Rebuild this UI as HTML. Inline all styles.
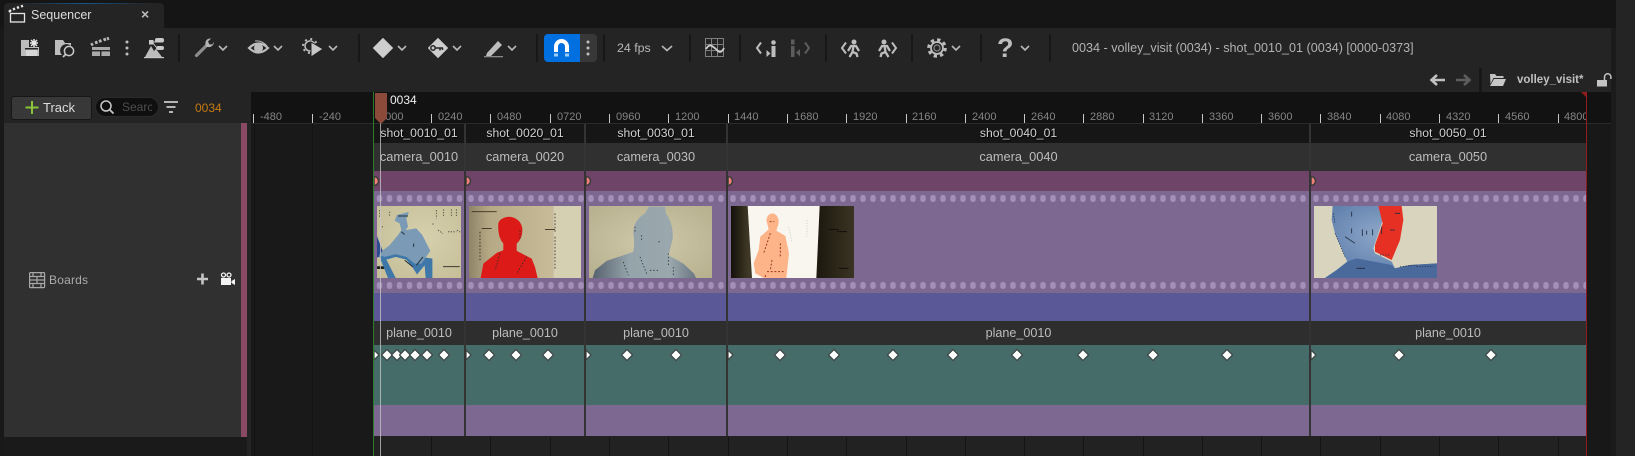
<!DOCTYPE html>
<html><head><meta charset="utf-8"><title>Sequencer</title>
<style>
html,body{margin:0;padding:0;background:#1b1b1b}
#p{position:relative;width:1635px;height:456px;overflow:hidden;background:#1b1b1b;font-family:"Liberation Sans",sans-serif}
#p div,#p svg{position:absolute}
.t{white-space:nowrap;line-height:16px;height:16px}
.c{text-align:center;white-space:nowrap;line-height:16px;height:16px}
.s{top:125px;font-size:12.2px;color:#d0d0d0;text-shadow:1px 1px 1px #000}
.m{top:149px;font-size:12.8px;color:#bdbdbd}
.l{top:325px;font-size:12.6px;color:#bdbdbd}
.r{top:109px;font-size:11px;color:#858585}
</style></head><body><div id="p">
<div style="left:0;top:0;width:1616px;height:456px;background:#151515"></div>
<div style="left:1616px;top:0;width:19px;height:456px;background:#242424"></div>
<div style="left:1611px;top:28px;width:5px;height:428px;background:#1b1b1b"></div>
<div style="left:0;top:28px;width:4px;height:428px;background:#191919"></div>
<!-- tab -->
<div style="left:4px;top:3px;width:160px;height:25px;background:#242424;border-radius:4px 4px 0 0"></div>
<div style="left:20px;top:3px;width:130px;height:1px;background:linear-gradient(90deg,#242424,#14578c 50%,#242424)"></div>
<div class="t" style="left:31px;top:7px;font-size:12.5px;color:#dcdcdc">Sequencer</div>
<div class="t" style="left:141px;top:6px;font-size:14px;font-weight:bold;color:#bdbdbd">×</div>
<!-- toolbar -->
<div style="left:4px;top:28px;width:1607px;height:64px;background:#242424"></div>
<!-- left header & panel -->
<div style="left:4px;top:92px;width:247px;height:31px;background:#242424"></div>
<div style="left:4px;top:123px;width:237px;height:314px;background:#303030"></div>
<div style="left:241px;top:123px;width:6px;height:314px;background:#8a4a64"></div>
<div style="left:4px;top:437px;width:243px;height:19px;background:#1a1a1a"></div>
<div style="left:247px;top:123px;width:4px;height:333px;background:#242424"></div>
<!-- timeline bg -->
<div style="left:251px;top:92px;width:1360px;height:31px;background:#121212"></div>
<div style="left:251px;top:123px;width:1360px;height:1px;background:#2b2b2b"></div>
<div style="left:251px;top:124px;width:122px;height:332px;background:#191919"></div>
<div style="left:1587px;top:124px;width:24px;height:332px;background:#181818"></div>
<div style="left:373px;top:436px;width:1213px;height:20px;background:#222"></div>
<!-- rows -->
<div style="left:374px;top:124px;width:1212px;height:19px;background:#161616"></div>
<div style="left:374px;top:143px;width:1212px;height:28px;background:#303030"></div>
<div style="left:374px;top:171px;width:1212px;height:20px;background:#6e4468"></div>
<div style="left:374px;top:191px;width:1212px;height:102px;background:#7c6890"></div>
<div style="left:374px;top:293px;width:1212px;height:28px;background:#5a5896"></div>
<div style="left:374px;top:321px;width:1212px;height:24px;background:#2e2e2e"></div>
<div style="left:374px;top:345px;width:1212px;height:60px;background:#466c69"></div>
<div style="left:374px;top:405px;width:1212px;height:31px;background:#7c6890"></div>

<!-- thumbnails -->
<svg style="left:377px;top:206px" width="84" height="72" viewBox="12 18 252 215" preserveAspectRatio="none">
<defs><radialGradient id="b1" cx=".55" cy=".45" r=".75"><stop offset="0" stop-color="#d6d0ae"/><stop offset="1" stop-color="#c4bd96"/></radialGradient></defs>
<rect x="12" y="18" width="252" height="215" fill="url(#b1)"/>
<path d="M12 108 L30 155 L18 170 L12 172Z" fill="#2c4c92"/>
<path d="M12 198h30v8h-30z" fill="#1c1c18"/>
<path d="M65 62 L72 45 L108 35 L100 55 L105 80 L98 90 L130 85 L148 105 L172 152 L158 172 L178 175 L178 233 L158 233 L155 195 L132 222 L118 200 L100 178 L68 170 L40 178 L68 233 L45 233 L30 195 L18 165 L30 150 L50 135 L75 105 L85 90 L80 70 Z" fill="#7a9ab5"/>
<path d="M18 165 L30 195 L45 233 L68 233 L40 178 L68 170 L100 178 L118 200 L132 222 L155 195 L158 233 L178 233 L178 175 L158 172 L145 190 L125 190 L100 170 L68 162 L35 170Z" fill="#3f78a8"/>
<path d="M75 48h30M85 95l10 8M122 130v10M95 180l25 20M150 170l-20 25" stroke="#23303a" stroke-width="3" fill="none"/>
<path d="M210 199h50" stroke="#3a3a30" stroke-width="3"/>
<path d="M190 30v25M212 28v20M235 28v20M250 28v20M180 70v8M195 90l15 10M225 95h25M252 90l10 6M20 30v22M50 35v12M28 78v8" stroke="#44443a" stroke-width="2.500" fill="none" stroke-dasharray="4 4"/>
</svg>
<svg style="left:469px;top:206px" width="112" height="72" viewBox="387 288 336 215" preserveAspectRatio="none">
<defs><linearGradient id="g2" x1="0" x2="1" y1="0" y2="0"><stop offset="0" stop-color="#8f8466"/><stop offset=".25" stop-color="#b6aa86"/><stop offset="1" stop-color="#c8bc98"/></linearGradient></defs>
<rect x="387" y="288" width="253" height="215" fill="url(#g2)"/>
<rect x="640" y="288" width="83" height="215" fill="#d6d0b2"/>
<path d="M475 340 Q480 322 510 320 Q542 325 547 355 Q548 385 530 400 L530 422 L575 445 L585 470 L593 503 L422 503 L430 460 L470 428 L490 420 L490 400 Q472 380 475 340Z" fill="#dc1a18"/>
<path d="M395 305h75M425 355h30M615 358h30" stroke="#3a3020" stroke-width="2.500" fill="none"/>
<path d="M420 365v90M645 310v60M645 380v100M540 360v30M480 430l-15 50M560 440l-30 50" stroke="#3a2a20" stroke-width="2.500" fill="none" stroke-dasharray="5 5"/>
</svg>
<svg style="left:589px;top:206px" width="123" height="72" viewBox="747 288 369 215" preserveAspectRatio="none">
<defs><radialGradient id="b3" cx=".5" cy=".5" r=".75"><stop offset="0" stop-color="#cfc9aa"/><stop offset="1" stop-color="#b5ae8c"/></radialGradient>
<linearGradient id="f3" x1="0" x2="1" y1="0" y2="0"><stop offset="0" stop-color="#56626e"/><stop offset=".35" stop-color="#95a3aa"/><stop offset=".75" stop-color="#9aa8ae"/><stop offset="1" stop-color="#6a7680"/></linearGradient></defs>
<rect x="747" y="288" width="369" height="215" fill="url(#b3)"/>
<path d="M927 290 L975 290 L978 310 Q1000 340 998 385 Q990 420 985 435 L1030 460 L1062 490 L1068 503 L758 503 L765 480 L800 452 L880 425 Q885 400 880 370 Q880 330 915 310Z" fill="url(#f3)"/>
<path d="M905 375v20M955 395h10M885 350v15M850 455l15 40M930 480h30M985 430v40M900 440l20 50M1000 470v25" stroke="#2a2f33" stroke-width="2.500" fill="none" stroke-dasharray="4 6"/>
</svg>
<svg style="left:731px;top:206px" width="123" height="72" viewBox="12 18 369 216" preserveAspectRatio="none">
<defs><linearGradient id="d4" x1="0" x2="1" y1="0" y2="0"><stop offset="0" stop-color="#15110a"/><stop offset=".14" stop-color="#3f3826"/><stop offset=".72" stop-color="#1e1a10"/><stop offset="1" stop-color="#3b3423"/></linearGradient></defs>
<rect x="12" y="18" width="369" height="216" fill="url(#d4)"/>
<path d="M62 18 L278 18 L268 234 L75 234 L68 120Z" fill="#f8f6ef"/>
<path d="M118 60 Q122 40 138 40 Q156 45 155 70 L148 92 L175 108 L186 160 L178 234 L110 234 L85 220 L80 190 L95 150 L100 110 L125 88Z" fill="#fdb489"/>
<path d="M128 65h14M130 100l-20 60M160 130v40M120 215h50M135 180l-5 30M115 225v8" stroke="#9a3a20" stroke-width="3" fill="none" stroke-dasharray="6 5"/>
<path d="M185 80l10 45M240 60v50" stroke="#b9b9b2" stroke-width="1.500" stroke-dasharray="4 4"/>
<path d="M305 88h30M330 95h30M335 205h30" stroke="#0e0c08" stroke-width="2.500"/>
</svg>
<svg style="left:1314px;top:206px" width="123" height="72" viewBox="12 18 369 216" preserveAspectRatio="none">
<defs><radialGradient id="h5b" cx=".5" cy=".4" r=".75"><stop offset="0" stop-color="#8fa8c8"/><stop offset="1" stop-color="#4f72a4"/></radialGradient></defs>
<rect x="12" y="18" width="369" height="216" fill="#d8d4be"/>
<path d="M68 18 L205 18 L218 60 L205 100 L190 145 L195 160 L245 185 L255 205 L300 195 L381 190 L381 234 L45 234 L80 210 L112 185 L105 170 L75 100 L65 60Z" fill="url(#h5b)"/>
<path d="M45 234 L80 210 L112 185 L140 175 L245 195 L255 205 L300 195 L381 190 L381 234Z" fill="#4a6a9c"/>
<path d="M205 18 L275 18 L280 60 L270 120 L245 180 L195 155 L195 135 L218 70Z" fill="#e63024"/>
<path d="M125 35v15M125 85v15M157 88v20M170 92v12M188 88v18M215 80v22M105 110l30 20M140 205h25M240 90h15M255 40h15" stroke="#1e2a3e" stroke-width="2.500" fill="none"/>
<path d="M70 40l5 30M75 100l30 70M210 165h30M270 200l50 -5M320 200h50" stroke="#1e2a3e" stroke-width="2" fill="none" stroke-dasharray="4 4"/>
</svg>

<!-- section labels -->
<div class="c s" style="left:373px;width:92px">shot_0010_01</div>
<div class="c s" style="left:465px;width:120px">shot_0020_01</div>
<div class="c s" style="left:585px;width:142px">shot_0030_01</div>
<div class="c s" style="left:727px;width:583px">shot_0040_01</div>
<div class="c s" style="left:1310px;width:276px">shot_0050_01</div>
<div class="c m" style="left:373px;width:92px">camera_0010</div>
<div class="c m" style="left:465px;width:120px">camera_0020</div>
<div class="c m" style="left:585px;width:142px">camera_0030</div>
<div class="c m" style="left:727px;width:583px">camera_0040</div>
<div class="c m" style="left:1310px;width:276px">camera_0050</div>
<div class="c l" style="left:373px;width:92px">plane_0010</div>
<div class="c l" style="left:465px;width:120px">plane_0010</div>
<div class="c l" style="left:585px;width:142px">plane_0010</div>
<div class="c l" style="left:727px;width:583px">plane_0010</div>
<div class="c l" style="left:1310px;width:276px">plane_0010</div>

<!-- ruler labels -->
<div class="t r" style="left:260px">-480</div><div class="t r" style="left:319px">-240</div>
<div class="t r" style="left:379px">0000</div><div class="t r" style="left:438px">0240</div>
<div class="t r" style="left:497px">0480</div><div class="t r" style="left:557px">0720</div>
<div class="t r" style="left:616px">0960</div><div class="t r" style="left:675px">1200</div>
<div class="t r" style="left:734px">1440</div><div class="t r" style="left:794px">1680</div>
<div class="t r" style="left:853px">1920</div><div class="t r" style="left:912px">2160</div>
<div class="t r" style="left:972px">2400</div><div class="t r" style="left:1031px">2640</div>
<div class="t r" style="left:1090px">2880</div><div class="t r" style="left:1149px">3120</div>
<div class="t r" style="left:1209px">3360</div><div class="t r" style="left:1268px">3600</div>
<div class="t r" style="left:1327px">3840</div><div class="t r" style="left:1386px">4080</div>
<div class="t r" style="left:1446px">4320</div><div class="t r" style="left:1505px">4560</div>
<div class="t r" style="left:1564px;width:22px;overflow:hidden">4800</div>

<!-- header texts -->
<div style="left:11px;top:96px;width:79px;height:22px;background:#383838;border:1px solid #161616;border-radius:3px"></div>
<div class="t" style="left:43px;top:100px;font-size:13px;color:#dcdcdc">Track</div>
<div style="left:95px;top:97px;width:64px;height:20px;background:#0f0f0f;border-radius:10px;border:1px solid #2a2a2a;box-sizing:border-box"></div>
<div class="t" style="left:122px;top:99px;width:30px;overflow:hidden;font-size:12px;color:#4e4e4e">Search</div>
<div class="t" style="left:195px;top:100px;font-size:12px;color:#c67a12">0034</div>
<div class="t" style="left:1072px;top:40px;font-size:12.6px;color:#b2b2b2">0034 - volley_visit (0034) - shot_0010_01 (0034) [0000-0373]</div>
<div class="t" style="left:617px;top:40px;font-size:12.4px;color:#b8b8b8">24 fps</div>
<div class="t" style="left:1517px;top:72px;font-size:11.5px;font-weight:bold;color:#c0c0c0">volley_visit*</div>
<div class="t" style="left:49px;top:272px;font-size:12px;color:#ababab;letter-spacing:.2px">Boards</div>
<div class="t" style="left:390px;top:92px;font-size:12px;color:#f0f0f0">0034</div>
<div style="left:997px;top:33px;font-size:27px;line-height:30px;font-weight:bold;color:#bdbdbd">?</div>

<svg style="left:0;top:0" width="1635" height="456" viewBox="0 0 1635 456">
<defs>
<pattern id="h1" patternUnits="userSpaceOnUse" x="374.8" y="0" width="10" height="456"><rect x="2" y="0" width="5.4" height="7" rx="2.4" fill="#a48fb8"/></pattern>
<pattern id="h2" patternUnits="userSpaceOnUse" x="466.3" y="0" width="10" height="456"><rect x="2" y="0" width="5.4" height="7" rx="2.4" fill="#a48fb8"/></pattern>
<pattern id="h3" patternUnits="userSpaceOnUse" x="586.3" y="0" width="10" height="456"><rect x="2" y="0" width="5.4" height="7" rx="2.4" fill="#a48fb8"/></pattern>
<pattern id="h4" patternUnits="userSpaceOnUse" x="728.3" y="0" width="10" height="456"><rect x="2" y="0" width="5.4" height="7" rx="2.4" fill="#a48fb8"/></pattern>
<pattern id="h5" patternUnits="userSpaceOnUse" x="1311.3" y="0" width="10" height="456"><rect x="2" y="0" width="5.4" height="7" rx="2.4" fill="#a48fb8"/></pattern>
</defs>
<!-- sprockets -->
<g transform="translate(0,195)"><rect x="374" width="90" height="7" fill="url(#h1)"/><rect x="466" width="118" height="7" fill="url(#h2)"/><rect x="586" width="140" height="7" fill="url(#h3)"/><rect x="728" width="581" height="7" fill="url(#h4)"/><rect x="1311" width="275" height="7" fill="url(#h5)"/></g>
<g transform="translate(0,282)"><rect x="374" width="90" height="7" fill="url(#h1)"/><rect x="466" width="118" height="7" fill="url(#h2)"/><rect x="586" width="140" height="7" fill="url(#h3)"/><rect x="728" width="581" height="7" fill="url(#h4)"/><rect x="1311" width="275" height="7" fill="url(#h5)"/></g>
<!-- pink keys (half circles, clipped by the section start) -->
<g fill="#f08078" stroke="#3c3c3c" stroke-width="1.5"><path d="M374 176.500a4.500 4.500 0 0 1 0 9z"/><path d="M466 176.500a4.500 4.500 0 0 1 0 9z"/><path d="M586 176.500a4.500 4.500 0 0 1 0 9z"/><path d="M728 176.500a4.500 4.500 0 0 1 0 9z"/><path d="M1311 176.500a4.500 4.500 0 0 1 0 9z"/></g>
<!-- grid lines bottom -->
<g fill="#141414"><rect x="254" y="124" width="1" height="332"/><rect x="312" y="124" width="1" height="332"/>
<rect x="431" y="437" width="1" height="19"/><rect x="490" y="437" width="1" height="19"/><rect x="550" y="437" width="1" height="19"/><rect x="609" y="437" width="1" height="19"/><rect x="668" y="437" width="1" height="19"/><rect x="728" y="437" width="1" height="19"/><rect x="787" y="437" width="1" height="19"/><rect x="846" y="437" width="1" height="19"/><rect x="906" y="437" width="1" height="19"/><rect x="965" y="437" width="1" height="19"/><rect x="1024" y="437" width="1" height="19"/><rect x="1083" y="437" width="1" height="19"/><rect x="1143" y="437" width="1" height="19"/><rect x="1202" y="437" width="1" height="19"/><rect x="1261" y="437" width="1" height="19"/><rect x="1320" y="437" width="1" height="19"/><rect x="1380" y="437" width="1" height="19"/><rect x="1439" y="437" width="1" height="19"/><rect x="1498" y="437" width="1" height="19"/><rect x="1558" y="437" width="1" height="19"/></g>
<!-- ticks -->
<g fill="#c8c8c8"><rect x="253" y="114" width="1" height="9"/><rect x="312" y="114" width="1" height="9"/><rect x="431" y="114" width="1" height="9"/><rect x="490" y="114" width="1" height="9"/><rect x="550" y="114" width="1" height="9"/><rect x="609" y="114" width="1" height="9"/><rect x="668" y="114" width="1" height="9"/><rect x="728" y="114" width="1" height="9"/><rect x="787" y="114" width="1" height="9"/><rect x="846" y="114" width="1" height="9"/><rect x="906" y="114" width="1" height="9"/><rect x="965" y="114" width="1" height="9"/><rect x="1024" y="114" width="1" height="9"/><rect x="1083" y="114" width="1" height="9"/><rect x="1143" y="114" width="1" height="9"/><rect x="1202" y="114" width="1" height="9"/><rect x="1261" y="114" width="1" height="9"/><rect x="1320" y="114" width="1" height="9"/><rect x="1380" y="114" width="1" height="9"/><rect x="1439" y="114" width="1" height="9"/><rect x="1498" y="114" width="1" height="9"/><rect x="1558" y="114" width="1" height="9"/></g>
<!-- key diamonds -->
<g fill="#fff" stroke="#3e4a48" stroke-width="1.300" stroke-linejoin="round">
<path d="M374 350l5 5-5 5z"/><path d="M466 350l5 5-5 5z"/><path d="M586 350l5 5-5 5z"/><path d="M728 350l5 5-5 5z"/><path d="M1311 350l5 5-5 5z"/>
<path d="M387 349.500l5.500 5.500-5.500 5.500-5.500-5.500z"/><path d="M397 349.500l5.500 5.500-5.500 5.500-5.500-5.500z"/><path d="M405 349.500l5.500 5.500-5.500 5.500-5.500-5.500z"/><path d="M415 349.500l5.500 5.500-5.500 5.500-5.500-5.500z"/><path d="M427 349.500l5.500 5.500-5.500 5.500-5.500-5.500z"/><path d="M444 349.500l5.500 5.500-5.500 5.500-5.500-5.500z"/>
<path d="M489 349.500l5.500 5.500-5.500 5.500-5.500-5.500z"/><path d="M516 349.500l5.500 5.500-5.500 5.500-5.500-5.500z"/><path d="M548 349.500l5.500 5.500-5.500 5.500-5.500-5.500z"/>
<path d="M627 349.500l5.500 5.500-5.500 5.500-5.500-5.500z"/><path d="M676 349.500l5.500 5.500-5.500 5.500-5.500-5.500z"/>
<path d="M780 349.500l5.500 5.500-5.500 5.500-5.500-5.500z"/><path d="M834 349.500l5.500 5.500-5.500 5.500-5.500-5.500z"/><path d="M893 349.500l5.500 5.500-5.500 5.500-5.500-5.500z"/><path d="M953 349.500l5.500 5.500-5.500 5.500-5.500-5.500z"/><path d="M1017 349.500l5.500 5.500-5.500 5.500-5.500-5.500z"/><path d="M1083 349.500l5.500 5.500-5.500 5.500-5.500-5.500z"/><path d="M1153 349.500l5.500 5.500-5.500 5.500-5.500-5.500z"/><path d="M1227 349.500l5.500 5.500-5.500 5.500-5.500-5.500z"/>
<path d="M1399 349.500l5.500 5.500-5.500 5.500-5.500-5.500z"/><path d="M1491 349.500l5.500 5.500-5.500 5.500-5.500-5.500z"/>
</g>
<!-- separators -->
<g fill="#343434"><rect x="464" y="124" width="2" height="312"/><rect x="584" y="124" width="2" height="312"/><rect x="726" y="124" width="2" height="312"/><rect x="1309" y="124" width="2" height="312"/></g>
<!-- playhead -->
<rect x="373" y="92" width="1" height="364" fill="#2b7d2b"/>
<rect x="380" y="123" width="1" height="333" fill="#c8c8c8" opacity=".75"/>
<path d="M375 93h12v25l-6 6-6-6z" fill="#8c4a3a"/>
<!-- end marker -->
<rect x="1586" y="92" width="1" height="364" fill="#8f1d1d"/>
<path d="M1581 92h6v6z" fill="#8f1d1d"/>

<!-- toolbar separators -->
<g fill="#181818"><rect x="178" y="34" width="2" height="28"/><rect x="358" y="34" width="2" height="28"/><rect x="536" y="34" width="2" height="28"/><rect x="603" y="34" width="2" height="28"/><rect x="689" y="34" width="2" height="28"/><rect x="739" y="34" width="2" height="28"/><rect x="825" y="34" width="2" height="28"/><rect x="911" y="34" width="2" height="28"/><rect x="980" y="34" width="2" height="28"/><rect x="1049" y="34" width="2" height="28"/><rect x="1479" y="68" width="3" height="24"/></g>

<!-- tab clapper -->
<g fill="none" stroke="#e6e6e6" stroke-width="1.300"><rect x="10.500" y="13.500" width="14" height="8.500"/></g>
<path d="M9 12L11 10 M13 9.500l2-1M17 8l2-1M21 6.500l2-.8" stroke="#e6e6e6" stroke-width="2.400"/>

<!-- chevrons -->
<g fill="none" stroke="#b8b8b8" stroke-width="1.600"><path d="M219 46l4 4 4-4M274 46l4 4 4-4M329 46l4 4 4-4M398 46l4 4 4-4M453 46l4 4 4-4M508 46l4 4 4-4M662 46l5 4.500 5-4.500M952 46l4 4 4-4M1021 46l4 4 4-4"/></g>

<!-- save -->
<path d="M21 40h8v7h10v9H21z" fill="#bdbdbd"/><rect x="26" y="50" width="11" height="6" fill="#d6d6d6"/><rect x="25" y="48" width="13" height="1.500" fill="#242424"/>
<path d="M34 39v8M30 43h8M31 40l6 6M37 40l-6 6" stroke="#e8e8e8" stroke-width="1.500"/>
<!-- open find -->
<path d="M55 40h8l2 3h6v3a6 6 0 0 0-9 9h-7z" fill="#bdbdbd"/><circle cx="69" cy="51" r="4.600" fill="none" stroke="#c8c8c8" stroke-width="1.500"/><path d="M65.500 54.500L63 57" stroke="#c8c8c8" stroke-width="1.800"/>
<!-- clapper -->
<rect x="92" y="47" width="18" height="9" fill="#a8a8a8"/><rect x="92" y="50" width="18" height="1.400" fill="#242424"/><rect x="100" y="51" width="1.400" height="5" fill="#242424"/>
<path d="M91 45l2-1.200M95 43l2.500-1M99 41.500l2.500-1M103.500 40l2.500-1M107 39l2-.8" stroke="#b8b8b8" stroke-width="3"/>
<!-- dots -->
<g fill="#bdbdbd"><circle cx="127" cy="42" r="1.500"/><circle cx="127" cy="48" r="1.500"/><circle cx="127" cy="54" r="1.500"/></g>
<!-- hierarchy -->
<path d="M145 57l6-11 3 5 2-2 6 8z" fill="#bdbdbd"/><rect x="144" y="57" width="20" height="1.200" fill="#c8c8c8"/>
<rect x="155" y="38" width="9" height="4.500" rx="2" fill="#c8c8c8"/><rect x="156" y="46" width="8" height="4" rx="2" fill="#c8c8c8"/><rect x="149" y="40" width="4.500" height="4.500" fill="#c8c8c8"/><path d="M153 42h3M153 43l3 4" stroke="#c8c8c8"/>
<!-- wrench -->
<path d="M196.500 55.500L207 45" stroke="#8d8d8d" stroke-width="3.200" stroke-linecap="round"/>
<path d="M206 46a5.500 5.500 0 0 1 1-6.500 5.500 5.500 0 0 1 4-1l-3 3 1.500 3 3-.2 1.500-2.500a5.500 5.500 0 0 1-7.500 5z" fill="#b4b4b4"/>
<!-- eye -->
<path d="M249 48q9.500-9 19 0q-9.500 9-19 0z" fill="none" stroke="#bdbdbd" stroke-width="2.200"/><circle cx="258.500" cy="48" r="4.500" fill="#bdbdbd"/><path d="M255 41q7-1 12 5" stroke="#bdbdbd" fill="none"/>
<!-- gear play -->
<circle cx="310" cy="46" r="5" fill="none" stroke="#bdbdbd" stroke-width="1.500"/><circle cx="310" cy="46" r="7" fill="none" stroke="#bdbdbd" stroke-width="2" stroke-dasharray="2 3.500"/>
<path d="M311 42l12 7-12 8z" fill="#c8c8c8" stroke="#242424"/>
<!-- diamond -->
<path d="M383 38.500l9.500 9.500-9.500 9.500-9.500-9.500z" fill="#cdcdcd" stroke="#cdcdcd" stroke-linejoin="round"/>
<!-- key diamond -->
<path d="M438 38.500l9.500 9.500-9.500 9.500-9.500-9.500z" fill="#cdcdcd" stroke="#cdcdcd" stroke-linejoin="round"/>
<circle cx="433" cy="48" r="2.200" fill="none" stroke="#242424" stroke-width="1.500"/><path d="M435 48h8M440 48v2.500M442.500 48v2" stroke="#242424" stroke-width="1.500"/>
<!-- pen -->
<path d="M487 53l11-12 4 4-11 11h-5z" fill="#bdbdbd"/><rect x="484" y="56" width="19" height="1.300" fill="#8a8a8a"/>
<!-- magnet button -->
<path d="M544 38a4 4 0 0 1 4-4h32v28h-32a4 4 0 0 1-4-4z" fill="#0070e0"/>
<path d="M580 34h13a4 4 0 0 1 4 4v20a4 4 0 0 1-4 4h-13z" fill="#383838"/>
<path d="M556 52V46.500a5.500 5.500 0 0 1 11 0V52" fill="none" stroke="#fff" stroke-width="4"/>
<rect x="554" y="53.500" width="4" height="3" fill="#9ccbf5"/><rect x="565" y="53.500" width="4" height="3" fill="#9ccbf5"/>
<g fill="#c0c0c0"><circle cx="588" cy="42" r="1.500"/><circle cx="588" cy="48" r="1.500"/><circle cx="588" cy="54" r="1.500"/></g>
<!-- graph -->
<g stroke="#7e7e7e" fill="none"><rect x="705.500" y="38.500" width="18" height="18"/><path d="M711.500 38v19M717.500 38v19M705 44.500h19M705 50.500h19"/></g>
<path d="M706 49q3-5 6-3t6 5 6-3" stroke="#cfcfcf" stroke-width="1.800" fill="none"/>
<!-- prev / next -->
<path d="M761 42.500l-4 5.500 4 5.500" stroke="#bdbdbd" stroke-width="2" fill="none"/>
<circle cx="773.500" cy="42.500" r="2.300" fill="#bdbdbd"/><rect x="771.500" y="46" width="4" height="11" fill="#bdbdbd"/><path d="M766.500 50l4 3.500-4 3.500z" fill="#bdbdbd"/>
<g fill="#5c5c5c"><rect x="791" y="39.500" width="3.500" height="5"/><rect x="791" y="46" width="3.500" height="11"/><path d="M800 49l-4 3.500 4 4z"/></g>
<path d="M805 42.500l4 5.500-4 5.500" stroke="#5c5c5c" stroke-width="2" fill="none"/>
<!-- walkers -->
<path d="M846 42.500l-4 5.500 4 5.500" stroke="#bdbdbd" stroke-width="2" fill="none"/>
<circle cx="854" cy="42" r="2.500" fill="#bdbdbd"/>
<path d="M848 51l3-5h5l3 5M853.500 46l-1 6-3 5M852.500 52l4 1.500 1 3.500" stroke="#bdbdbd" stroke-width="2.300" fill="none"/>
<path d="M892 42.500l4 5.500-4 5.500" stroke="#bdbdbd" stroke-width="2" fill="none"/>
<circle cx="884" cy="42" r="2.500" fill="#bdbdbd"/>
<path d="M890 51l-3-5h-5l-3 5M884.500 46l1 6 3 5M885.500 52l-4 1.500-1 3.500" stroke="#bdbdbd" stroke-width="2.300" fill="none"/>
<!-- gear -->
<circle cx="937" cy="48" r="8.300" fill="none" stroke="#bdbdbd" stroke-width="3" stroke-dasharray="3.300 3.200"/>
<circle cx="937" cy="48" r="6" fill="#242424" stroke="#bdbdbd" stroke-width="1.800"/><circle cx="937" cy="48" r="3" fill="none" stroke="#8a8a8a" stroke-width="1.200"/>
<!-- arrows -->
<path d="M1445 80h-13M1437 75l-5.500 5 5.500 5" stroke="#c0c0c0" stroke-width="2.600" fill="none"/>
<path d="M1456 80h13M1464 75l5.500 5-5.500 5" stroke="#5e5e5e" stroke-width="2.600" fill="none"/>
<!-- folder -->
<path d="M1490 74h5l1.500 2h7v2h-10l-3 6z" fill="#c0c0c0"/><path d="M1494 79h12l-3 7h-13z" fill="#c8c8c8"/>
<!-- lock -->
<rect x="1597" y="80" width="10" height="6.500" fill="#c4c4c4"/><path d="M1604.500 80v-3a3.200 3.200 0 0 1 6.400 0v2" fill="none" stroke="#c4c4c4" stroke-width="1.500"/>
<!-- + track -->
<path d="M32 101v13M25.500 107.500h13" stroke="#8ac23c" stroke-width="2"/>
<!-- search glass -->
<circle cx="106" cy="106" r="5" fill="none" stroke="#c8c8c8" stroke-width="1.500"/><path d="M110 110l3.500 3.500" stroke="#c8c8c8" stroke-width="1.800"/>
<!-- filter -->
<path d="M164 102h14M166.500 107h9M169 112h4" stroke="#c8c8c8" stroke-width="1.800"/>
<!-- boards icon -->
<g fill="none" stroke="#a8a8a8" stroke-width="1.200"><rect x="29.600" y="272.600" width="15" height="15" rx="1"/><path d="M29.500 276.500h15M29.500 283.500h15M37 276.500v7M33 272.500v4M41 272.500v4M33 283.500v4M41 283.500v4M29.500 280h15"/></g>
<!-- plus + camera -->
<path d="M202.500 273.500v11M197 279h11" stroke="#c4c4c4" stroke-width="2.600"/>
<rect x="221" y="278" width="10" height="7" fill="#f2f2f2"/><path d="M231.500 281l3.500-2v6l-3.500-2z" fill="#f2f2f2"/>
<circle cx="223.500" cy="275" r="2" fill="none" stroke="#f2f2f2" stroke-width="1.300"/><circle cx="229" cy="275" r="2" fill="none" stroke="#f2f2f2" stroke-width="1.300"/>
</svg>
</div></body></html>
